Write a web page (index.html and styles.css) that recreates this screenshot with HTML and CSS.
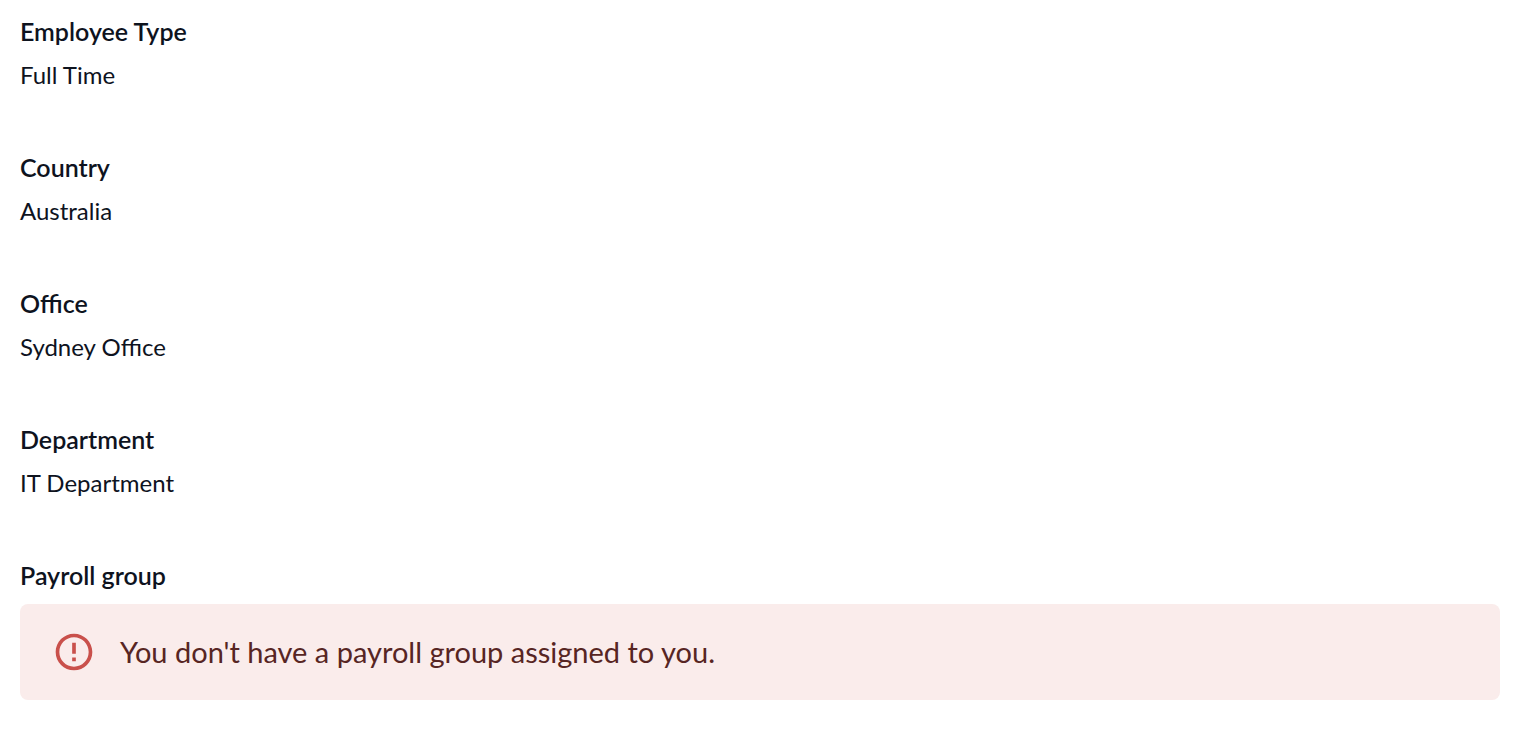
FILE: index.html
```html
<!DOCTYPE html>
<html lang="en">
<head>
	<meta charset="UTF-8">
	<meta name="viewport" content="width=device-width, initial-scale=1.0">
	<title>Employee details</title>
	<link rel="stylesheet" href="styles.css">
</head>
<body>
	<dl class="details">
		<div class="detail">
			<dt class="label">Employee Type</dt>
			<dd class="value">Full Time</dd>
		</div>
		<div class="detail">
			<dt class="label">Country</dt>
			<dd class="value">Australia</dd>
		</div>
		<div class="detail">
			<dt class="label">Office</dt>
			<dd class="value">Sydney Office</dd>
		</div>
		<div class="detail">
			<dt class="label">Department</dt>
			<dd class="value">IT Department</dd>
		</div>
		<div class="detail">
			<dt class="label">Payroll group</dt>
			<dd class="alert">
				<svg class="alert-icon" viewBox="0 0 24 24" aria-hidden="true">
					<path d="M11 15h2v2h-2zm0-8h2v6h-2zm.99-5C6.47 2 2 6.48 2 12s4.47 10 9.99 10C17.52 22 22 17.52 22 12S17.52 2 11.99 2zM12 20c-4.42 0-8-3.58-8-8s3.58-8 8-8 8 3.58 8 8-3.58 8-8 8z"/>
				</svg>
				<span>You don't have a payroll group assigned to you.</span>
			</dd>
		</div>
	</dl>
</body>
</html>
```

FILE: styles.css
```css
body{
	margin: 0;
	padding: 11px 20px;
	background-color: #fff;
	color: #0e131e;
	font-family: Lato, "Open Sans", sans-serif;
	font-size: 24px;
	line-height: 40px;
}
.details{
	display: flex;
	flex-direction: column;
	gap: 52px;
	margin: 0;
}
.detail{
	display: flex;
	flex-direction: column;
	gap: 4px;
}
.label{
	font-size: 25px;
	font-weight: 600;
}
.value{
	margin: 0;
}
.alert{
	display: flex;
	align-items: center;
	gap: 24px;
	margin: 5px 0 0;
	padding: 26px 32px;
	border-radius: 8px;
	background-color: #faeceb;
	color: #572523;
	font-size: 29px;
}
.alert-icon{
	flex: none;
	width: 44px;
	height: 44px;
	fill: #c9504b;
}
```
